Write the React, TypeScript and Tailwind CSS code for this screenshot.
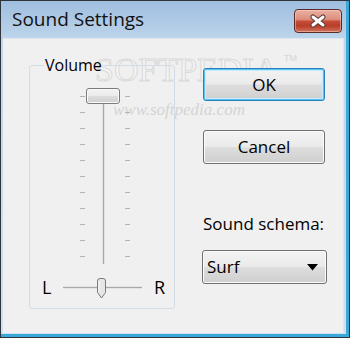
import React from 'react';

const btnFace =
  'bg-[linear-gradient(to_bottom,#f2f2f2_0%,#ebebeb_48%,#dddddd_52%,#cfcfcf_100%)]';

function Ticks() {
  return (
    <div className="flex flex-col">
      {Array.from({ length: 11 }).map((_, i) => (
        <div key={i} className="flex h-[16px] items-center">
          <div className="h-px w-[5px] bg-[#b4b4b4]" />
        </div>
      ))}
    </div>
  );
}

function CloseButton() {
  return (
    <div className="flex h-[24px] w-[48px] items-center justify-center rounded-[4px] border border-[#5b2b28] bg-[linear-gradient(to_bottom,#eab0a2_0%,#de8f7d_42%,#c54c38_52%,#b83d29_72%,#d2735d_100%)] shadow-[inset_0_0_0_1px_rgba(255,220,210,0.45)]">
      <svg width="18" height="14" viewBox="0 0 18 14">
        <path d="M4 3 L14 11 M14 3 L4 11" stroke="#5a3a36" strokeWidth="5" strokeLinecap="round" />
        <path d="M4 3 L14 11 M14 3 L4 11" stroke="#ffffff" strokeWidth="3" strokeLinecap="round" />
      </svg>
    </div>
  );
}

export default function App() {
  return (
    <div className="h-[338px] w-[350px] border border-[#2f343a] font-['Open_Sans',sans-serif] text-black">
      <div className="flex h-full flex-col border-b-[3px] border-r-[3px] border-[#3aa8d9] bg-[linear-gradient(to_bottom,#9fbedf_0px,#bfd6ed_40px,#cfe0f1_100%)]">
        {/* title bar */}
        <div className="flex h-[37px] shrink-0 items-start justify-between">
          <span className="ml-[11px] mt-[5px] text-[19px] leading-[26px] text-[#111]">Sound Settings</span>
          <div className="mr-[4px] mt-[8px]">
            <CloseButton />
          </div>
        </div>

        {/* client area */}
        <div className="relative mb-[1px] ml-[2px] mr-[2px] flex flex-1 items-start border-r border-t border-[#dfe6ee] bg-[#f0f0f0] pl-[26px] pt-[15px]">
          {/* watermark */}
          <div className="pointer-events-none absolute left-[92px] top-[14px] font-['Liberation_Serif',serif] text-[34px] leading-none text-[#f4f4f4] [-webkit-text-stroke:1px_#dadada]">
            SOFTPEDIA
          </div>
          <div className="pointer-events-none absolute left-[281px] top-[15px] font-['Liberation_Sans',sans-serif] text-[9px] leading-none text-[#d4d4d4]">
            TM
          </div>
          <div className="pointer-events-none absolute left-[110px] top-[62px] font-['Liberation_Serif',serif] text-[17px] italic leading-none text-[#d4d4d4]">
            www.softpedia.com
          </div>

          <fieldset className="relative w-[146px] min-w-0 shrink-0 rounded-[3px] border border-[#d3dce3] px-[14px] pb-[9px]">
            <legend className="px-[1px] text-[16px] leading-[22px]">Volume</legend>
            <div className="ml-[36px] mt-[12px] flex">
              <Ticks />
              <div className="relative ml-[1px] h-[176px] w-[34px]">
                <div className="mx-auto h-full w-[3px] border-x border-[#e2e2e2] bg-[#a9a9a9]" />
                <div className={`absolute left-0 top-0 h-[16px] w-[34px] rounded-[3px] border border-[#7b7b7b] ${btnFace} shadow-[inset_0_0_0_1px_#fafafa]`} />
              </div>
              <div className="ml-[5px]">
                <Ticks />
              </div>
            </div>
            <div className="-ml-[2px] mt-[11px] flex w-[123px] items-center text-[18px] leading-[24px]">
              <span>L</span>
              <div className="relative mx-[12px] h-[3px] flex-1 border-y border-[#e4e4e4] bg-[#a9a9a9]">
                <svg className="absolute left-[33px] top-[-9px]" width="11" height="21" viewBox="0 0 11 21">
                  <path
                    d="M1.5 3 Q1.5 0.5 4 0.5 L7 0.5 Q9.5 0.5 9.5 3 L9.5 14.5 L5.5 20 L1.5 14.5 Z"
                    fill="#e6e6e6"
                    stroke="#7b7b7b"
                    strokeWidth="1"
                  />
                  <path d="M3 3 L3 13.5" stroke="#fafafa" strokeWidth="1" />
                </svg>
              </div>
              <span>R</span>
            </div>
          </fieldset>

          <div className="relative ml-[28px] mt-[14px] flex w-[122px] shrink-0 flex-col text-[17px]">
            <button className={`flex h-[33px] items-center justify-center rounded-[3px] border border-[#2c7fbf] ${btnFace} shadow-[inset_0_0_0_1px_#5cc2f2,inset_0_0_0_2px_#c6ecfb]`}>
              OK
            </button>
            <button className={`mt-[29px] flex h-[34px] items-center justify-center rounded-[3px] border border-[#707070] ${btnFace} shadow-[inset_0_0_0_1px_#fbfbfb]`}>
              Cancel
            </button>
            <div className="mt-[48px] leading-[23px]">Sound schema:</div>
            <div className={`-ml-[1px] mt-[15px] flex h-[34px] w-[125px] items-center justify-between rounded-[3px] border border-[#707070] pl-[4px] pr-[8px] ${btnFace} shadow-[inset_0_0_0_1px_#fbfbfb]`}>
              <span>Surf</span>
              <svg width="11" height="7" viewBox="0 0 11 7">
                <path d="M0 0 L11 0 L5.5 6.5 Z" fill="#000" />
              </svg>
            </div>
          </div>
        </div>
      </div>
    </div>
  );
}
